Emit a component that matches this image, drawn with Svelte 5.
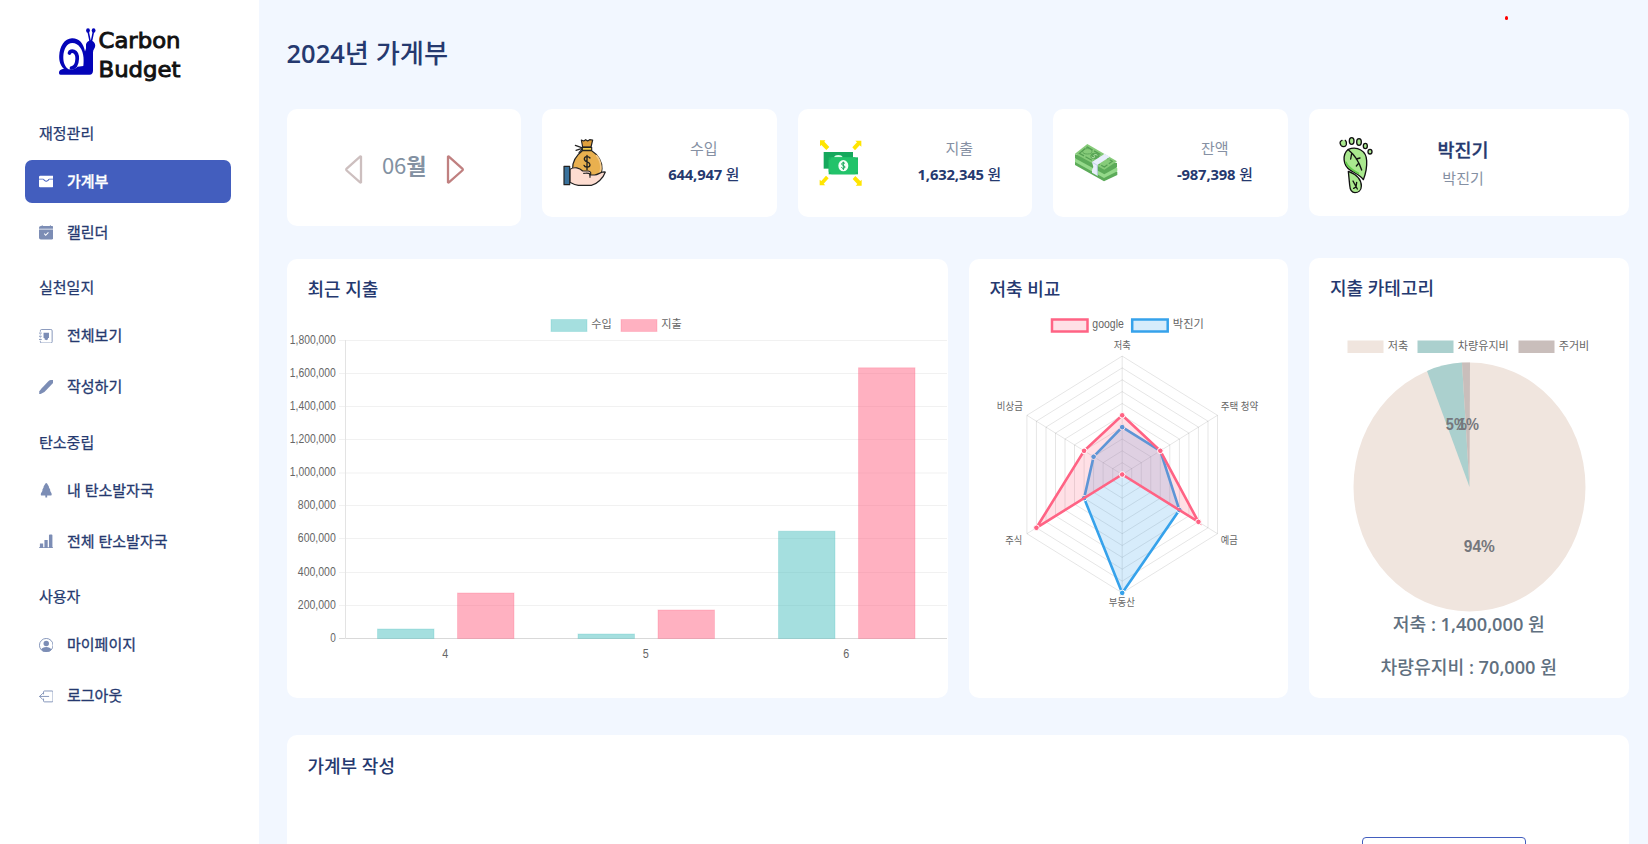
<script>
  const groups = [
    { title: '재정관리', items: [
      { label: '가계부', icon: 'wallet', active: true },
      { label: '캘린더', icon: 'calendar' }
    ] },
    { title: '실천일지', items: [
      { label: '전체보기', icon: 'journal' },
      { label: '작성하기', icon: 'pen' }
    ] },
    { title: '탄소중립', items: [
      { label: '내 탄소발자국', icon: 'tree' },
      { label: '전체 탄소발자국', icon: 'bars' }
    ] },
    { title: '사용자', items: [
      { label: '마이페이지', icon: 'person' },
      { label: '로그아웃', icon: 'logout' }
    ] }
  ];

  const stats = [
    { label: '수입', value: '644,947', icon: 'bag' },
    { label: '지출', value: '1,632,345', icon: 'spend' },
    { label: '잔액', value: '-987,398', icon: 'cash' }
  ];

  const ticks = [
    ['1,800,000', 90.5, 46], ['1,600,000', 123.5, 46], ['1,400,000', 156.5, 46],
    ['1,200,000', 189.5, 46], ['1,000,000', 223, 46], ['800,000', 255.5, 38],
    ['600,000', 288.5, 38], ['400,000', 322.5, 38], ['200,000', 355.5, 38], ['0', 388.5, 5.6]
  ];
  const bars = [
    [90.5, 379, 'in'], [170.5, 343, 'out'],
    [291, 384, 'in'], [371, 360, 'out'],
    [491.5, 281.2, 'in'], [571.5, 117.8, 'out']
  ];

  const cx = 153.2, cy = 224.5, ry = 118.4;
  const spokeRx = 95.3;
  const point = (i, v) => {
    const a = (Math.PI / 3) * i;
    return [cx + (Math.sin(a) / Math.sin(Math.PI / 3)) * spokeRx * v, cy - Math.cos(a) * ry * v];
  };
  const ring = (vals) => vals.map((v, i) => point(i, v).map((n) => n.toFixed(1)).join(',')).join(' ');
  const series = [
    { cls: 'mine', vals: [0.4, 0.4, 0.6, 1, 0.4, 0.3] },
    { cls: 'google', vals: [0.5, 0.4, 0.8, 0, 0.9, 0.4] }
  ];
  const levels = [0.1, 0.2, 0.3, 0.4, 0.5, 0.6, 0.7, 0.8, 0.9, 1];
</script>

{#snippet label(t, x, y, w, size = 11)}
  <text {x} {y} font-size={size} textLength={w} lengthAdjust="spacingAndGlyphs">{t}</text>
{/snippet}

{#snippet menuIcon(name)}
  <svg class="mi" viewBox="0 0 16 16" aria-hidden="true">
    {#if name === 'wallet'}
      <path d="M1.5 1.800h13A1.500 1.500 0 0 1 16 3.300v1.900h-4.600c-.5 0-.9.3-1.100.7C9.900 6.900 9 7.500 8 7.500s-1.900-.6-2.300-1.600c-.2-.4-.6-.7-1.100-.7H0V3.300A1.500 1.500 0 0 1 1.500 1.800zM0 6.200h4.700C5.300 7.700 6.600 8.500 8 8.500s2.700-.8 3.300-2.300H16v7.200a1.200 1.200 0 0 1-1.200 1.200H1.200A1.200 1.200 0 0 1 0 13.400z" />
    {:else if name === 'calendar'}
      <path fill-rule="evenodd" d="M4 .5a.5.500 0 0 0-1 0V1H2a2 2 0 0 0-2 2v1h16V3a2 2 0 0 0-2-2h-1V.5a.5.500 0 0 0-1 0V1H4zM16 5H0v9a2 2 0 0 0 2 2h12a2 2 0 0 0 2-2zm-5.200 3.600-3.400 3.400-2-2 .8-.8 1.200 1.200 2.600-2.600z" />
    {:else if name === 'journal'}
      <path d="M1.500 3V2A1.500 1.500 0 0 1 3 .5h10A1.500 1.500 0 0 1 14.500 2v12a1.500 1.500 0 0 1-1.500 1.500H3A1.500 1.500 0 0 1 1.500 14v-1M1.500 6v.8M1.500 9.300v.8" fill="none" stroke="currentColor" />
      <path d="M0 4.500h3M0 8h3M0 11.500h3" stroke="currentColor" />
      <path d="M5 4h6v6H9.800l.2 1.300-2 1.200-2-1.200.2-1.300H5z" />
    {:else if name === 'pen'}
      <path d="M10.600 1.200C11.400.4 12.200 0 13 0l2.800.1c.4.900.3 2.500-.8 3.700L6 13.200 2.300 15.100.2 16 .3 12.300 3 9z" />
    {:else if name === 'tree'}
      <path d="M8 0c.4 0 .7.200.9.600l2 3.300.1 1.200 1.300 2.200.1 1.400 1.400 2.700.2 1.200c0 .8-.4 1.100-1 1.100H9V16H7v-2.300H3c-.7 0-1.100-.4-1-1.100l.2-1.200 1.500-2.700.100-1.400 1.200-2.200.1-1.200 2-3.300C7.300.2 7.600 0 8 0z" />
    {:else if name === 'bars'}
      <path d="M1 10.500h3.600V15H1zM6 6.500h3.600V15H6zM11 1.500c0-.6.4-1 1-1h1.800c.6 0 1 .4 1 1V15H11zM0 14.500h16v1H0z" />
    {:else if name === 'person'}
      <circle cx="8" cy="8" r="7.500" fill="none" stroke="currentColor" />
      <circle cx="8" cy="6" r="3" />
      <path d="M2.300 12.700C3.300 11 5.200 10 8 10s4.700 1 5.700 2.700A7.500 7.500 0 0 1 8 15.500a7.500 7.500 0 0 1-5.700-2.800z" />
    {:else}
      <path d="M5 5.500V3.200c0-.6.400-1 1-1h8.500c.6 0 1 .4 1 1v10c0 .6-.4 1-1 1H6c-.6 0-1-.4-1-1V11M.7 8.200h10M4 4.900.7 8.200 4 11.500" fill="none" stroke="currentColor" stroke-linecap="round" stroke-linejoin="round" />
    {/if}
  </svg>
{/snippet}

<div class="app">
  <aside>
    <div class="logo">
      <svg width="123" height="58" viewBox="58 26 123 58">
        <g fill="#0404b8">
          <path d="M59 72.500c0-2 2-3.200 5-3.700C60.500 66 59 61 59.200 56 59.700 46 64.500 38.500 72 38.300c7-.2 11.500 5 13 13.200l1-3V45c0-2 2-4.500 4.500-4.500s5 2.500 4.700 5.500c-.2 2.500-2.200 3.500-2.200 6.500v18c0 2.500-1 4.300-3.500 4.300h-29c-1 0-1.500-1-1.500-2.300z" />
          <ellipse cx="88" cy="30.500" rx="1.900" ry="2.300" /><ellipse cx="93.600" cy="30.500" rx="1.900" ry="2.300" />
          <path d="M88 31l2.300 11M93.600 31l-2.300 11" stroke="#0404b8" stroke-width="1.500" />
        </g>
        <path d="M68.500 69.200C65 67 63.200 62.500 63.300 57c.2-8 3.700-14 9-14 6.500 0 10.700 7 11.200 14.500.2 3.500.1 6.500-.2 8.500l-5.800.8C76.300 68.300 74 69.400 71.500 69.400z" fill="#fff" />
        <path d="M69.500 53c1-3.200 8-2.700 7.700 5.800-.2 5-2.200 8.800-5.700 9.200" fill="none" stroke="#0404b8" stroke-width="3.700" stroke-linecap="round" />
        <g class="brand">
          <text x="98.500" y="48.300" textLength="82" lengthAdjust="spacingAndGlyphs">Carbon</text>
          <text x="98.500" y="76.800" textLength="82" lengthAdjust="spacingAndGlyphs">Budget</text>
        </g>
      </svg>
    </div>
    <nav>
      {#each groups as g}
        <h6>{g.title}</h6>
        {#each g.items as it}
          <a class:active={it.active}>{@render menuIcon(it.icon)}<span>{it.label}</span></a>
        {/each}
      {/each}
    </nav>
  </aside>

  <main>
    <i class="dot"></i>
    <h1><b>2024</b>년 가게부</h1>
    <div class="grid">
      <div class="left">
        <div class="stats">
          <section class="card month">
            <svg width="18" height="29" viewBox="0 0 18 29"><path d="M16 1.800v25.400c-.3.300-.8.300-1.200 0L1.700 15.500c-.6-.6-.6-1.300 0-1.900L14.800 1.800c.4-.4.900-.4 1.200 0z" fill="none" stroke="#cdbfbf" stroke-width="2.300" /></svg>
            <span>06<b>월</b></span>
            <svg width="18" height="29" viewBox="0 0 18 29"><path d="M2 1.800v25.400c.3.300.8.300 1.200 0l13.100-11.700c.6-.6.6-1.300 0-1.900L3.200 1.800c-.4-.4-.9-.4-1.200 0z" fill="none" stroke="#c08080" stroke-width="2.300" /></svg>
          </section>
          {#each stats as s}
            <section class="card stat">
              {#if s.icon === 'bag'}
                <svg width="44" height="50" viewBox="69 39 132 150" stroke="#222" stroke-width="3.500" stroke-linejoin="round" stroke-linecap="round">
                  <path d="M127 77c-18 14-30 35-29 54 2 22 14 27 44 27s43-6 44-27c1-19-11-42-31-54z" fill="#e9b04f" />
                  <path d="M170 92c15 18 17 47 4 60" stroke="#f4c987" stroke-width="5" fill="none" />
                  <path d="M128 66l-4-21 7 3 6-4 6 4 6-4 9 1-5 21z" fill="#e0a03c" />
                  <path d="M127 67h28v9h-28z" fill="#f3cf4d" />
                  <path d="M125 68l-19-7M124 71l-16 5M126 73l-9 10" fill="none" />
                  <path d="M150 99c-5-7-17-5-17 3 0 11 17 7 17 17 0 9-15 10-18 2M141 91v43" fill="none" stroke-width="4" />
                  <path d="M90 133c13-9 29-4 38 5h17c8 1 10 8 4 12h15c13-2 20-11 32-9-6 18-25 37-42 40h-39c-13-1-21-7-25-9z" fill="#fddcd0" />
                  <path d="M150 157v-10c-5-4-13-2-19-2" fill="none" />
                  <path d="M72 124h17v55H72z" fill="#39719b" />
                </svg>
              {:else if s.icon === 'spend'}
                <svg width="44" height="48" viewBox="116 117 132 144">
                  <g fill="#ffe500"><path d="M119 121h16l-3 4 15 16-9 9-15-15-4 4zM243 122v18l-5-4-14 15-8-9 14-15-5-5zM118 256v-17l5 4 14-16 8 8-15 16 5 5zM244 257h-18l5-5-14-15 8-9 15 15 4-4z" /></g>
                  <path d="M130 156h88v50h-88z" fill="#15a85c" /><ellipse cx="174" cy="175" rx="13" ry="10" fill="#d9fbe6" />
                  <path d="M145 172h88v51h-88z" fill="#1cb862" />
                  <path d="M145 180q8 0 8-8h72q0 8 8 8v35q-8 0-8 8h-72q0-8-8-8z" fill="#22c36a" />
                  <ellipse cx="189" cy="197" rx="15" ry="17" fill="#f5fff8" />
                  <path d="M194 191c-2-4-10-4-10 1s10 4 10 9-8 6-11 1M189 185v25" fill="none" stroke="#17a85b" stroke-width="3" />
                </svg>
              {:else}
                <svg width="44" height="40" viewBox="882 130 132 120">
                  <path d="M885 180l37-25 90 62v9l-40 19-87-49z" fill="#5cab59" />
                  <path d="M885 177l37-25 90 54v9l-40 20-87-48z" fill="#94d98a" />
                  <path d="M885 164v12l88 48 38-21v-13z" fill="#5cab59" />
                  <path d="M885 162l37-29 89 52-38 25z" fill="#86cb79" />
                  <path d="M898 161l24-19 75 43-24 17z" fill="none" stroke="#559f53" stroke-width="3.500" stroke-dasharray="22 5" />
                  <ellipse cx="922" cy="155" rx="14" ry="8" fill="none" stroke="#559f53" stroke-width="2.500" />
                  <ellipse cx="945" cy="169" rx="14" ry="10" fill="#5ba858" />
                  <path d="M952 167c-6-5-13-1-9 3s-6 7-8 1" fill="none" stroke="#b9e6ae" stroke-width="3" />
                  <path d="M936 187l38-25 16 9-38 25v32l-16-9v-8l4-9z" fill="#e8eefb" />
                  <path d="M937 188l15 9v32" fill="none" stroke="#b9cbe4" stroke-width="2.500" />
                </svg>
              {/if}
              <div><span>{s.label}</span><strong>{s.value} <em>원</em></strong></div>
            </section>
          {/each}
        </div>

        <div class="charts">
          <section class="card panel">
            <h4>최근 지출</h4>
            <svg class="chart" width="661" height="380" viewBox="0 67 661 380">
              <rect class="in" x="264" y="69.500" width="36" height="12" /><rect class="out" x="334" y="69.500" width="36" height="12" />
              {@render label('수입', 305, 78, 20.500)}
              {@render label('지출', 375, 78, 20.500)}
              {#each ticks as [t, y, w]}
                <path d="M52 {y}H660" stroke="#000" stroke-opacity={t === '0' ? 0.15 : 0.055} />
                {@render label(t, 49.500 - w, y + 3, w, 12)}
              {/each}
              <path d="M58.500 90V389" stroke="#e3e3e3" />
              {#each bars as [x, y, c]}<rect class={c} {x} {y} width="56.500" height={388.5 - y} />{/each}
              {@render label('4', 156, 408, 6, 12)}
              {@render label('5', 356.500, 408, 6, 12)}
              {@render label('6', 557, 408, 6, 12)}
            </svg>
          </section>

          <section class="card panel">
            <h4>저축 비교</h4>
            <svg class="chart" width="319" height="380" viewBox="0 67 319 380">
              <rect class="google" x="83" y="69.500" width="35.500" height="12" stroke-width="2.500" />
              <rect class="mine" x="163.200" y="69.500" width="35.500" height="12" stroke-width="2.500" />
              {@render label('google', 124, 78, 31.500, 12)}
              {@render label('박진기', 204.5, 78, 31)}
              {#each levels as l}<polygon points={ring([l, l, l, l, l, l])} fill="none" stroke="#000" stroke-opacity=".1" />{/each}
              {#each levels.slice(0, 6) as _, i}
                <line x1={cx} y1={cy} x2={point(i, 1)[0]} y2={point(i, 1)[1]} stroke="#000" stroke-opacity=".1" />
              {/each}
              {#each series as s}
                <polygon class={s.cls} points={ring(s.vals)} stroke-width="2.600" />
                {#each s.vals as v, i}
                  <circle class="pt {s.cls}" cx={point(i, v)[0]} cy={point(i, v)[1]} r="2.800" />
                {/each}
              {/each}
              {@render label('저축', 145.5, 99, 17, 10)}
              {@render label('주택 청약', 252.500, 160, 37.500, 10)}
              {@render label('예금', 252.500, 294, 17, 10)}
              {@render label('부동산', 140.500, 356, 26, 10)}
              {@render label('주식', 37, 294, 17, 10)}
              {@render label('비상금', 28.500, 160, 26, 10)}
            </svg>
          </section>
        </div>
      </div>

      <div class="right">
        <section class="card user">
          <svg width="34" height="58" viewBox="146 408 102 174" stroke="#111" stroke-width="4" stroke-linecap="round" stroke-linejoin="round">
            <g fill="#a9e88e">
              <path d="M155 421c-6 2-8 8-3 15 5 6 14 5 16-2 1-6 0-10-3-13" />
              <ellipse cx="184" cy="423" rx="7" ry="10" /><ellipse cx="206" cy="426" rx="7" ry="10" />
              <ellipse cx="225" cy="438" rx="6" ry="8" /><ellipse cx="239" cy="455" rx="6" ry="7" />
              <path d="M174 448c27-10 54 4 55 34 1 17-3 39-10 57-6-11-23-19-38-28-25-15-25-48-7-63z" />
              <path d="M174 514c21 8 39 22 39 44 0 14-10 20-19 20-11 0-15-8-16-23z" />
            </g>
            <path d="M167 487c5 17 24 25 37 33" stroke="#62cb4a" stroke-width="5" fill="none" />
            <path d="M174 449c17 14 31 32 40 61M184 461l-3 16M198 477l11-3M203 492l-5 6M188 543l13 24M199 547l-2 14-7 4" fill="none" />
          </svg>
          <div><strong>박진기</strong><span>박진기</span></div>
        </section>

        <section class="card panel category">
          <h4>지출 카테고리</h4>
          <svg class="chart" width="320" height="294" viewBox="0 62 320 294">
            <rect x="38.500" y="82.500" width="36" height="12.500" fill="#f0e5de" /><rect x="108.500" y="82.500" width="36" height="12.500" fill="#abd0ce" /><rect x="209.500" y="82.500" width="36" height="12.500" fill="#c9bebb" />
            {@render label('저축', 79.500, 91.5, 20.500)}
            {@render label('차량유지비', 149.500, 91.5, 51)}
            {@render label('주거비', 250.500, 91.5, 30.500)}
            <ellipse cx="160.500" cy="229" rx="116" ry="124.500" fill="#f0e5de" />
            <path d="M160.500 229L118 113Q134 105.500 153 104.500z" fill="#abd0ce" />
            <path d="M160.500 229L153 104.500h8z" fill="#c9bebb" />
            <g class="pct">
              {@render label('5%', 137.500, 172, 21, 16)}
              {@render label('1%', 149.5, 172, 21, 16)}
              {@render label('94%', 155.5, 294, 31, 16)}
            </g>
          </svg>
          <p>저축 <b>: 1,400,000</b> 원</p>
          <p>차량유지비 <b>: 70,000</b> 원</p>
        </section>
      </div>
    </div>

    <section class="card panel form">
      <h4>가계부 작성</h4>
      <button aria-label="가계부 작성"></button>
    </section>
  </main>
</div>

<style>
  :global(body) { background: #f2f7ff; overflow: hidden; }
  * { box-sizing: border-box; }
  .app { display: flex; height: 844px; overflow: hidden; color: #25396f; font-family: "Open Sans", "Noto Sans CJK KR", sans-serif; }
  aside { width: 259px; flex: none; background: #fff; }
  .logo { height: 107.5px; padding: 26px 0 0 58px; }
  .logo svg { display: block; }
  .brand { font: 400 22px "DejaVu Sans", sans-serif; fill: #111; stroke: #111; stroke-width: .9; }
  nav { padding: 0 28px 0 25px; display: flex; flex-direction: column; }
  h6 { margin: 2.3px 0 3.700px; padding-left: 14px; height: 46.5px; line-height: 46px; font-size: 15px; font-weight: 400; -webkit-text-stroke: .25px; }
  nav a { display: flex; align-items: center; height: 43.5px; margin-bottom: 7.5px; padding-left: 13.500px; border-radius: 7px; font-size: 15px; font-weight: 400; line-height: 40px; -webkit-text-stroke: .3px; }
  nav a span { margin: -2px 0 0 14px; }
  .mi { width: 14.500px; height: 14.500px; fill: currentColor; color: #7c8db5; }
  nav a.active { background: #435ebe; color: #fff; font-weight: 500; }
  .active .mi { color: #fff; }
  main { position: relative; flex: 1; padding: 0 19px 0 27.5px; }
  .dot { position: absolute; left: 1245.5px; top: 16px; width: 3.500px; height: 3.500px; border-radius: 50%; background: #f00; }
  h1 { margin: 0; height: 109px; line-height: 106px; font-size: 26.2px; font-weight: 500; white-space: nowrap; }
  h1 b { font-size: 25.5px; font-weight: 600; }
  .grid { display: grid; grid-template-columns: 1001px 320.5px; gap: 21px; height: 589px; }
  .left, .right { display: flex; flex-direction: column; }
  .card { background: #fff; border-radius: 10px; }
  .stats { display: grid; grid-template-columns: repeat(4, 234.5px); gap: 21px; height: 150px; align-items: start; }
  .month { height: 117px; display: flex; align-items: center; justify-content: center; gap: 19px; padding: 3px 0 0 1px; }
  .month span { font-size: 22px; line-height: 30px; color: #8391a2; margin-top: -11px; font-family: "Noto Sans CJK KR", sans-serif; }
  .stat { height: 108px; display: grid; grid-template-columns: 89px 1fr; align-items: center; padding: 0 21px; }
  .stat div, .user div { display: flex; flex-direction: column; align-items: center; white-space: nowrap; }
  .stat div { margin-top: -5px; }
  .stat span { font-size: 15px; line-height: 26px; color: #8590a3; }
  .stat strong { font-size: 14.8px; line-height: 26px; font-weight: 700; letter-spacing: -.15px; }
  .stat em { font-style: normal; font-weight: 500; }
  .user { height: 107px; display: flex; padding: 27px 0 0 30px; margin-bottom: 42px; }
  .user div { margin: 0 0 0 65px; }
  .user strong { font-size: 18.5px; line-height: 28px; font-weight: 500; -webkit-text-stroke: .3px; }
  .user span { font-size: 15px; line-height: 28px; color: #8590a3; }
  .charts { display: grid; grid-template-columns: 661px 319px; gap: 21px; height: 439px; }
  h4 { margin: 0; padding-left: 21px; height: 58px; line-height: 61px; font-size: 18px; font-weight: 500; }
  .chart { display: block; font-family: "Liberation Sans", "Noto Sans CJK KR", sans-serif; fill: #666; }
  .chart text { transform: translateX(-.7px); }
  .in { fill: rgba(75, 192, 192, .5); stroke: rgba(75, 192, 192, .25); }
  .out { fill: rgba(255, 99, 132, .5); stroke: rgba(255, 99, 132, .25); }
  .google { fill: rgba(255, 99, 132, .2); stroke: #ff6384; }
  .mine { fill: rgba(54, 162, 235, .2); stroke: #36a2eb; }
  .pt { stroke: #fff; stroke-width: 1; }
  .pt.google { fill: #ff6384; }
  .pt.mine { fill: #36a2eb; }
  .pct { font-weight: 700; fill: #75777c; }
  .category { height: 440px; }
  .category h4 { height: 62px; padding-left: 21.5px; }
  .category p { margin: 0; height: 43px; line-height: 20px; text-align: center; font-size: 18.2px; font-weight: 500; color: #607080; }
  p b { font-weight: 600; }
  .form { margin-top: 37px; height: 140px; display: flex; flex-direction: column; }
  .form h4 { height: 102.5px; line-height: 62px; }
  button { align-self: flex-end; margin-right: 103.5px; width: 164px; height: 38px; flex: none; border: 1.500px solid #435ebe; border-radius: 4px; background: #fff; }
</style>
